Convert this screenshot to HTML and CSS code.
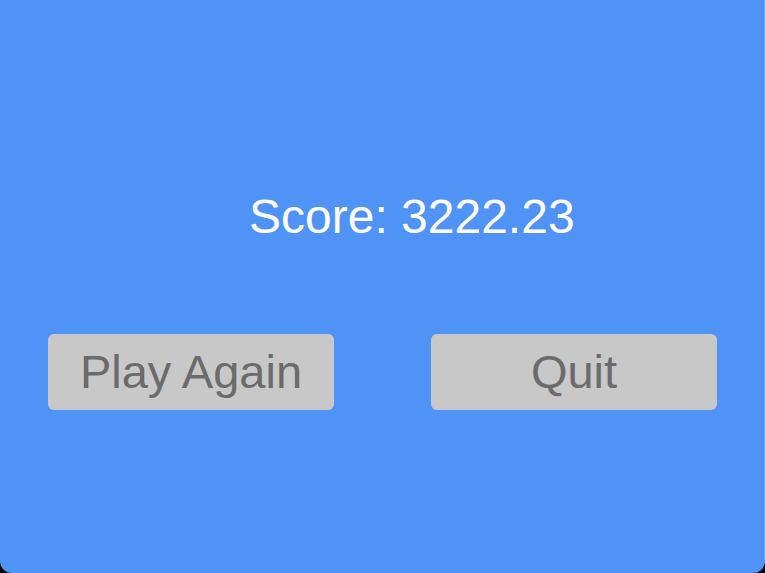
FILE: index.html
```html
<!DOCTYPE html>
<html lang="en">
  <head>
    <meta charset="UTF-8" />
    <meta name="viewport" content="width=device-width, initial-scale=1.0" />
    <title>Game Over</title>
    <link rel="stylesheet" href="styles.css">
  </head>
  <body>
    <div class="screen">
      <div class="score">Score: 3222.23</div>
      <div class="actions">
        <button type="button" id="playAgain">Play Again</button>
        <button type="button" id="quit">Quit</button>
      </div>
    </div>
  </body>
</html>
```

FILE: styles.css
```css
body {
  margin: 0;
  background-color: #000;
  font-family: "Liberation Sans", Arial, sans-serif;
}
.screen {
  height: 573px;
  box-sizing: border-box;
  background-color: #4f93f6;
  border-right: 1px solid #6ea6f6;
  border-radius: 0 0 12px 12px;
  display: flex;
  flex-direction: column;
}
.score {
  margin-top: 193px;
  padding-left: 249px;
  font-size: 48px;
  line-height: 48px;
  color: #fff;
}
.actions {
  margin-top: 93px;
  padding: 0 47px 0 48px;
  display: flex;
  justify-content: space-between;
}
.actions button {
  width: 286px;
  height: 76px;
  padding: 0;
  font-family: inherit;
  font-size: 47px;
  line-height: 76px;
  color: #6b6b6b;
  background-color: #c8c8c8;
  border: none;
  border-radius: 6px;
  cursor: pointer;
}
```
